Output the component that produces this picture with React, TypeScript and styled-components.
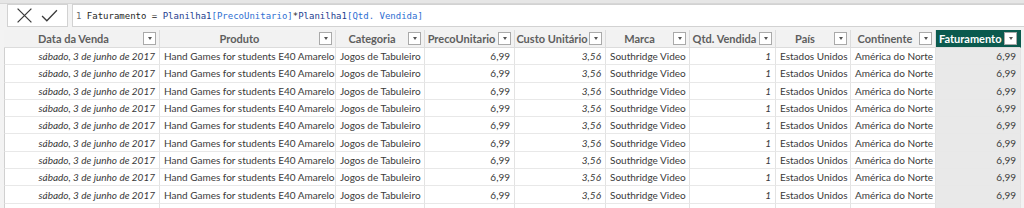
import React from "react";
import styled, { createGlobalStyle } from "styled-components";

const Global = createGlobalStyle`
  html, body { margin: 0; padding: 0; background: #ffffff; }
  body { font-family: Lato, "Liberation Sans", sans-serif; overflow: hidden; }
`;

const Page = styled.div`
  width: 1024px;
  height: 208px;
  background: #f3f3f3;
  display: flex;
  flex-direction: column;
  overflow: hidden;
  & > * { flex-shrink: 0; }
`;

const TopStrip = styled.div`
  height: 3px;
  background: #e6e6e6;
  border-bottom: 1px solid #d6d6d6;
`;

const FormulaBar = styled.div`
  display: flex;
  gap: 4px;
  padding: 0 0 0 7px;
  height: 23px;
  margin-bottom: 3px;
  background: #f3f3f3;
`;

const ActionBox = styled.div`
  width: 61px;
  background: #ffffff;
  border: 1px solid #d2d2d2;
  display: flex;
  align-items: center;
  gap: 8px;
  padding-left: 8px;
  box-sizing: border-box;
`;

const FormulaBox = styled.div`
  flex: 1;
  background: #ffffff;
  border: 1px solid #d2d2d2;
  border-right: none;
  display: flex;
  align-items: center;
  padding-left: 3px;
  font-family: "DejaVu Sans Mono", "Liberation Mono", monospace;
  font-size: 9px;
  color: #333333;
  white-space: pre;
`;

const Tok = styled.span<{ $kind: "num" | "plain" | "table" | "col" }>`
  color: ${(p) =>
    p.$kind === "num" ? "#6a6a6a" : p.$kind === "table" ? "#1d3d8f" : p.$kind === "col" ? "#2f6fd2" : "#262626"};
`;

const Grid = styled.div`
  margin-left: 4px;
  display: grid;
  grid-template-columns: 156px 176px 89px 90px 91px 84px 86px 75px 85px 85px 1fr;
  background: #ffffff;
  font-size: 10px;
  color: #3a3a3a;
`;

const HeadCell = styled.div<{ $active?: boolean }>`
  height: 18px;
  display: flex;
  align-items: center;
  box-sizing: border-box;
  border-right: 1px solid ${(p) => (p.$active ? "#0b5a4e" : "#dcdcdc")};
  border-bottom: 1px solid #dcdcdc;
  background: ${(p) => (p.$active ? "#0b5a4e" : "#f2f2f2")};
  color: ${(p) => (p.$active ? "#ffffff" : "#5e5e5e")};
  font-size: 11px;
  font-weight: 700;
  padding-right: 3px;
  white-space: nowrap;
  overflow: hidden;
`;

const HeadLabel = styled.span<{ $left?: boolean }>`
  flex: 1;
  text-align: ${(p) => (p.$left ? "left" : "center")};
  padding-left: ${(p) => (p.$left ? "3px" : "0")};
`;

const FilterBtn = styled.span`
  width: 11px;
  height: 11px;
  background: #ffffff;
  border: 1px solid #a9a9a9;
  display: flex;
  align-items: center;
  justify-content: center;
  flex-shrink: 0;
`;

const Caret = styled.span`
  width: 0;
  height: 0;
  border-left: 2.5px solid transparent;
  border-right: 2.5px solid transparent;
  border-top: 3px solid #555555;
`;

const Filler = styled.div<{ $head?: boolean }>`
  background: #f2f2f2;
  height: ${(p) => (p.$head ? "18px" : "17.3px")};
`;

const Cell = styled.div<{ $align: "left" | "right"; $italic?: boolean; $shade?: boolean; $first?: boolean }>`
  height: 17.3px;
  box-sizing: border-box;
  display: flex;
  align-items: center;
  justify-content: ${(p) => (p.$align === "right" ? "flex-end" : "flex-start")};
  padding: 0 4px;
  border-right: 1px solid #e3e3e3;
  border-bottom: 1px solid #e8e8e8;
  border-left: ${(p) => (p.$first ? "1px solid #d0d0d0" : "none")};
  font-style: ${(p) => (p.$italic ? "italic" : "normal")};
  background: ${(p) => (p.$shade ? "#e9e9e9" : "#ffffff")};
  white-space: nowrap;
  overflow: hidden;
`;

type Col = { label: string; align: "left" | "right"; italic?: boolean; value: string };

const cols: Col[] = [
  { label: "Data da Venda", align: "right", italic: true, value: "sábado, 3 de junho de 2017" },
  { label: "Produto", align: "left", value: "Hand Games for students E40 Amarelo" },
  { label: "Categoria", align: "left", value: "Jogos de Tabuleiro" },
  { label: "PrecoUnitario", align: "right", value: "6,99" },
  { label: "Custo Unitário", align: "right", italic: true, value: "3,56" },
  { label: "Marca", align: "left", value: "Southridge Video" },
  { label: "Qtd. Vendida", align: "right", italic: true, value: "1" },
  { label: "País", align: "left", value: "Estados Unidos" },
  { label: "Continente", align: "left", value: "América do Norte" },
  { label: "Faturamento", align: "right", value: "6,99" },
];

const rows = Array.from({ length: 10 }, (_, i) => i);

export default function App() {
  return (
    <Page>
      <Global />
      <TopStrip />
      <FormulaBar>
        <ActionBox>
          <svg width="17" height="17" viewBox="0 0 16 16">
            <path d="M1.5 1.5 L14.5 14.5 M14.5 1.5 L1.5 14.5" stroke="#3b3b3b" strokeWidth="1.2" fill="none" />
          </svg>
          <svg width="17" height="17" viewBox="0 0 16 16">
            <path d="M1 8.5 L5.5 13 L15 3" stroke="#3b3b3b" strokeWidth="1.2" fill="none" />
          </svg>
        </ActionBox>
        <FormulaBox>
          <Tok $kind="num">1 </Tok>
          <Tok $kind="plain">Faturamento = </Tok>
          <Tok $kind="table">Planilha1</Tok>
          <Tok $kind="col">[PrecoUnitario]</Tok>
          <Tok $kind="plain">*</Tok>
          <Tok $kind="table">Planilha1</Tok>
          <Tok $kind="col">[Qtd. Vendida]</Tok>
        </FormulaBox>
      </FormulaBar>
      <Grid>
        {cols.map((c, i) => (
          <HeadCell key={c.label} $active={i === cols.length - 1}>
            <HeadLabel $left={i === cols.length - 1}>{c.label}</HeadLabel>
            <FilterBtn>
              <Caret />
            </FilterBtn>
          </HeadCell>
        ))}
        <Filler $head />
        {rows.map((r) => (
          <React.Fragment key={r}>
            {cols.map((c, i) => (
              <Cell
                key={c.label}
                $align={c.align}
                $italic={c.italic}
                $shade={i === cols.length - 1}
                $first={i === 0}
              >
                {r < 9 ? c.value : ""}
              </Cell>
            ))}
            <Filler />
          </React.Fragment>
        ))}
      </Grid>
    </Page>
  );
}
